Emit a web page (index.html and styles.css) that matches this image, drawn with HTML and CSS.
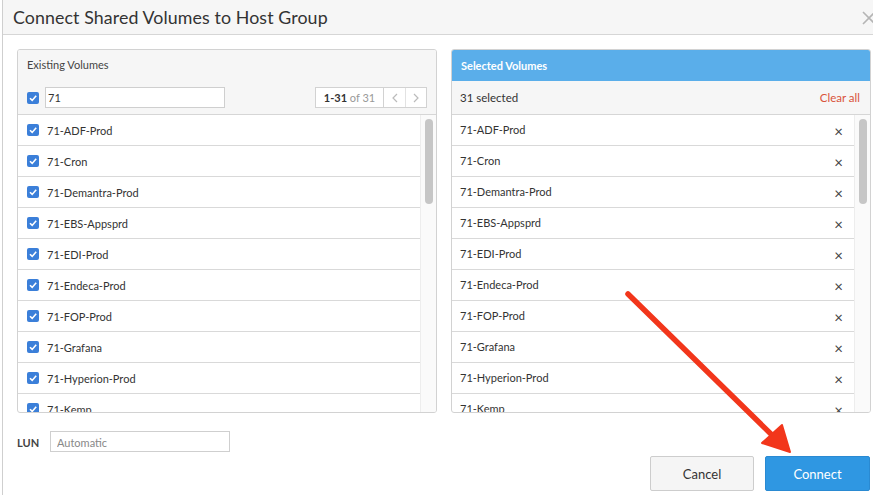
FILE: index.html
```html
<!DOCTYPE html>
<html>
<head>
<meta charset="utf-8">
<link rel="stylesheet" href="styles.css">
</head>
<body>
<div class="modal">
  <div class="modal-header">
    <h1 class="title">Connect Shared Volumes to Host Group</h1>
    <span class="close"><svg width="16" height="16" viewBox="0 0 16 16"><path d="M2 2L14 14M14 2L2 14" stroke="#b5b5b5" stroke-width="1.6"/></svg></span>
  </div>
  <div class="modal-body">
    <div class="panels">
      <div class="panel">
        <div class="panel-head">
          <div class="panel-title">Existing Volumes</div>
          <div class="search-row">
            <span class="cb"><svg viewBox="0 0 12 12"><path d="M3 6.2L5.2 8.4L9.2 3.8" fill="none" stroke="#fff" stroke-width="1.6"/></svg></span>
            <input class="search" type="text" value="71">
            <div class="pager">
              <span class="pager-count"><b>1-31</b> of 31</span>
              <span class="pager-btn"><svg width="8" height="10" viewBox="0 0 8 10"><path d="M6 1L2 5L6 9" fill="none" stroke="#bbb" stroke-width="1.2"/></svg></span>
              <span class="pager-btn"><svg width="8" height="10" viewBox="0 0 8 10"><path d="M2 1L6 5L2 9" fill="none" stroke="#bbb" stroke-width="1.2"/></svg></span>
            </div>
          </div>
        </div>
        <div class="list">
          <div class="rows">
            <div class="row"><span class="cb"><svg viewBox="0 0 12 12"><path d="M3 6.2L5.2 8.4L9.2 3.8" fill="none" stroke="#fff" stroke-width="1.6"/></svg></span>71-ADF-Prod</div>
            <div class="row"><span class="cb"><svg viewBox="0 0 12 12"><path d="M3 6.2L5.2 8.4L9.2 3.8" fill="none" stroke="#fff" stroke-width="1.6"/></svg></span>71-Cron</div>
            <div class="row"><span class="cb"><svg viewBox="0 0 12 12"><path d="M3 6.2L5.2 8.4L9.2 3.8" fill="none" stroke="#fff" stroke-width="1.6"/></svg></span>71-Demantra-Prod</div>
            <div class="row"><span class="cb"><svg viewBox="0 0 12 12"><path d="M3 6.2L5.2 8.4L9.2 3.8" fill="none" stroke="#fff" stroke-width="1.6"/></svg></span>71-EBS-Appsprd</div>
            <div class="row"><span class="cb"><svg viewBox="0 0 12 12"><path d="M3 6.2L5.2 8.4L9.2 3.8" fill="none" stroke="#fff" stroke-width="1.6"/></svg></span>71-EDI-Prod</div>
            <div class="row"><span class="cb"><svg viewBox="0 0 12 12"><path d="M3 6.2L5.2 8.4L9.2 3.8" fill="none" stroke="#fff" stroke-width="1.6"/></svg></span>71-Endeca-Prod</div>
            <div class="row"><span class="cb"><svg viewBox="0 0 12 12"><path d="M3 6.2L5.2 8.4L9.2 3.8" fill="none" stroke="#fff" stroke-width="1.6"/></svg></span>71-FOP-Prod</div>
            <div class="row"><span class="cb"><svg viewBox="0 0 12 12"><path d="M3 6.2L5.2 8.4L9.2 3.8" fill="none" stroke="#fff" stroke-width="1.6"/></svg></span>71-Grafana</div>
            <div class="row"><span class="cb"><svg viewBox="0 0 12 12"><path d="M3 6.2L5.2 8.4L9.2 3.8" fill="none" stroke="#fff" stroke-width="1.6"/></svg></span>71-Hyperion-Prod</div>
            <div class="row"><span class="cb"><svg viewBox="0 0 12 12"><path d="M3 6.2L5.2 8.4L9.2 3.8" fill="none" stroke="#fff" stroke-width="1.6"/></svg></span>71-Kemp</div>
          </div>
          <div class="scroll"><div class="thumb"></div></div>
        </div>
      </div>
      <div class="panel">
        <div class="sel-head">Selected Volumes</div>
        <div class="sel-sub"><span>31 selected</span><span class="clear">Clear all</span></div>
        <div class="list">
          <div class="rows">
            <div class="row srow"><span>71-ADF-Prod</span><span class="x">×</span></div>
            <div class="row srow"><span>71-Cron</span><span class="x">×</span></div>
            <div class="row srow"><span>71-Demantra-Prod</span><span class="x">×</span></div>
            <div class="row srow"><span>71-EBS-Appsprd</span><span class="x">×</span></div>
            <div class="row srow"><span>71-EDI-Prod</span><span class="x">×</span></div>
            <div class="row srow"><span>71-Endeca-Prod</span><span class="x">×</span></div>
            <div class="row srow"><span>71-FOP-Prod</span><span class="x">×</span></div>
            <div class="row srow"><span>71-Grafana</span><span class="x">×</span></div>
            <div class="row srow"><span>71-Hyperion-Prod</span><span class="x">×</span></div>
            <div class="row srow"><span>71-Kemp</span><span class="x">×</span></div>
          </div>
          <div class="scroll"><div class="thumb"></div></div>
        </div>
      </div>
    </div>
    <div class="lun-row">
      <label class="lun-label">LUN</label>
      <input class="lun-input" type="text" placeholder="Automatic">
    </div>
    <div class="footer">
      <button class="btn btn-cancel">Cancel</button>
      <button class="btn btn-connect">Connect</button>
    </div>
  </div>
</div>
<svg class="arrow" width="873" height="495" viewBox="0 0 873 495">
  <path d="M628 294L774 437" stroke="#f2361b" stroke-width="5.5" stroke-linecap="round"/>
  <path d="M762 443L782 425L790 452Z" fill="#f2361b" stroke="#f2361b" stroke-width="2" stroke-linejoin="round"/>
</svg>
</body>
</html>
```
FILE: styles.css
```css
* { box-sizing: border-box; }
html, body { margin: 0; padding: 0; }
body {
  width: 873px;
  height: 495px;
  overflow: hidden;
  background: #fff;
  font-family: Lato, "Open Sans", Arial, sans-serif;
  color: #333;
  position: relative;
}
.modal {
  margin-left: 2px;
  width: 885px;
  height: 495px;
  border-left: 1px solid #cfcfcf;
  background: #fff;
}
.modal-header {
  height: 35px;
  background: #f6f6f6;
  border-bottom: 1px solid #d6d6d6;
  display: flex;
  align-items: center;
  justify-content: space-between;
  padding: 0 10px 0 10px;
}
.title {
  margin: 0;
  font-size: 17.8px;
  font-weight: 400;
  color: #333;
  letter-spacing: 0.1px;
}
.close { display: flex; margin-top: 1px; }
.modal-body { padding: 14px 14px 0 14px; }
.panels { display: flex; gap: 14px; }
.panel {
  width: 420px;
  height: 364px;
  border: 1px solid #d2d2d2;
  border-radius: 3px;
  overflow: hidden;
  display: flex;
  flex-direction: column;
}
.panel-head {
  background: #f6f6f6;
  height: 65px;
  border-bottom: 1px solid #d6d6d6;
  padding: 8px 9px 0 9px;
}
.panel-title { font-size: 11px; color: #444; line-height: 13px; }
.search-row {
  display: flex;
  align-items: center;
  margin-top: 16px;
}
.cb {
  width: 12px;
  height: 12px;
  border-radius: 2px;
  background: #3b7fd9;
  display: inline-flex;
  flex: none;
}
.cb svg { width: 12px; height: 12px; }
.search {
  margin-left: 6px;
  width: 180px;
  height: 21px;
  border: 1px solid #cfcfcf;
  background: #fff;
  font-family: inherit;
  font-size: 11px;
  color: #333;
  padding: 0 2px;
  outline: none;
}
.pager {
  margin-left: auto;
  display: flex;
  height: 21px;
  border: 1px solid #d2d2d2;
  background: #fff;
  font-size: 11px;
}
.pager-count {
  width: 68px;
  display: flex;
  align-items: center;
  justify-content: center;
  color: #999;
  border-right: 1px solid #d2d2d2;
  white-space: pre;
}
.pager-count b { color: #333; font-weight: 700; }
.pager-btn {
  width: 21px;
  display: flex;
  align-items: center;
  justify-content: center;
}
.pager-btn + .pager-btn { border-left: 1px solid #e2e2e2; }
.list { flex: 1; display: flex; min-height: 0; }
.rows { flex: 1; overflow: hidden; }
.row {
  height: 31px;
  border-bottom: 1px solid #d9d9d9;
  display: flex;
  align-items: center;
  padding-left: 9px;
  font-size: 11px;
  color: #333;
  gap: 8px;
}
.srow {
  justify-content: space-between;
  padding: 8px 8px 0 8px;
  align-items: flex-start;
}
.x { font-size: 15px; color: #444; line-height: 13px; margin-top: 2px; margin-right: 3px; }
.scroll {
  width: 16px;
  flex: none;
  background: #fafafa;
  border-left: 1px solid #ededed;
  padding: 4px 3px 0 4px;
}
.thumb {
  height: 85px;
  border-radius: 4px;
  background: #c6c6c6;
}
.sel-head {
  height: 31px;
  background: #5aaeea;
  color: #fff;
  font-size: 11px;
  font-weight: 700;
  display: flex;
  align-items: center;
  padding-left: 9px;
}
.sel-sub {
  height: 34px;
  background: #f6f6f6;
  border-bottom: 1px solid #d6d6d6;
  display: flex;
  align-items: center;
  justify-content: space-between;
  padding: 0 10px 0 8px;
  font-size: 11.5px;
  color: #333;
}
.clear { color: #d9533a; font-size: 11.5px; }
.lun-row {
  display: flex;
  align-items: center;
  margin-top: 18px;
  height: 21px;
}
.lun-label { font-size: 11px; font-weight: 700; color: #444; width: 33px; padding-top: 2px; }
.lun-input {
  width: 180px;
  height: 21px;
  border: 1px solid #cfcfcf;
  font-family: inherit;
  font-size: 11px;
  padding: 2px 6px 0 6px;
  outline: none;
}
.lun-input::placeholder { color: #888; }
.footer {
  display: flex;
  justify-content: flex-end;
  gap: 11px;
  margin-top: 4px;
  padding-right: 3px;
}
.btn {
  height: 35px;
  font-family: inherit;
  font-size: 13px;
  border-radius: 2px;
  cursor: pointer;
}
.btn-cancel {
  width: 104px;
  background: #f5f5f5;
  border: 1px solid #cdcdcd;
  color: #333;
}
.btn-connect {
  width: 105px;
  background: #2f97e2;
  border: 1px solid #2a8ad2;
  color: #fff;
}
.arrow { position: absolute; left: 0; top: 0; pointer-events: none; }
```
